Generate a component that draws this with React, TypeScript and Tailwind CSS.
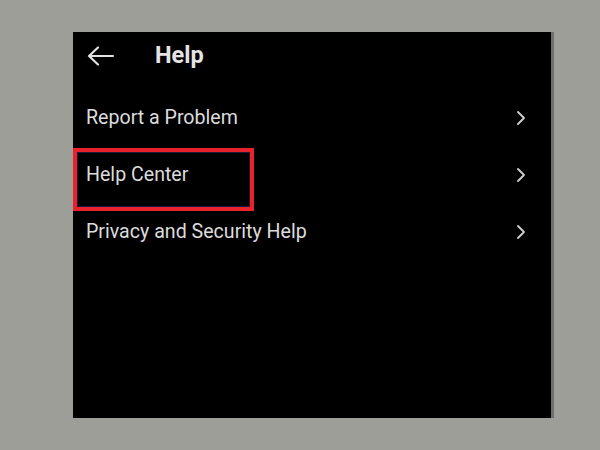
import React from "react";

const Chevron = () => (
  <svg width="12" height="16" viewBox="0 0 12 16" fill="none">
    <path d="M3 2 L9 8 L3 14" stroke="#cfcfcf" strokeWidth="1.8" strokeLinecap="round" strokeLinejoin="round" />
  </svg>
);

const Row = ({ label, boxed }: { label: string; boxed?: boolean }) => (
  <div className="relative flex h-[57px] items-center justify-between pl-[13px] pr-[24px]">
    {boxed && (
      <div className="absolute left-0 top-[2px] h-[63px] w-[181px] border-[4px] border-[#e8212b] shadow-[inset_0_0_0_1px_#1a1a40]" />
    )}
    <span className="text-[19.6px] text-[#dcdcdc]" style={{ fontFamily: "Roboto, sans-serif" }}>
      {label}
    </span>
    <Chevron />
  </div>
);

export default function App() {
  return (
    <div className="flex h-[450px] w-[600px] bg-[#9e9e99] pl-[73px] pt-[32px]">
      <div className="flex h-[386px] w-[481px] flex-col border-r-[3px] border-[#6e6e6b] bg-black">
        <div className="flex h-[48px] items-center pl-[14px]" style={{ fontFamily: "Roboto, sans-serif" }}>
          <svg width="28" height="20" viewBox="0 0 28 20" fill="none">
            <path d="M2 10 H26 M2 10 L11 1.5 M2 10 L11 18.5" stroke="#e0e0e0" strokeWidth="2.2" strokeLinecap="round" strokeLinejoin="round" />
          </svg>
          <span className="ml-[40px] text-[23.5px] font-bold text-[#e4e4e4]">Help</span>
        </div>
        <div className="mt-[9px] flex flex-col">
          <Row label="Report a Problem" />
          <Row label="Help Center" boxed />
          <Row label="Privacy and Security Help" />
        </div>
      </div>
    </div>
  );
}
